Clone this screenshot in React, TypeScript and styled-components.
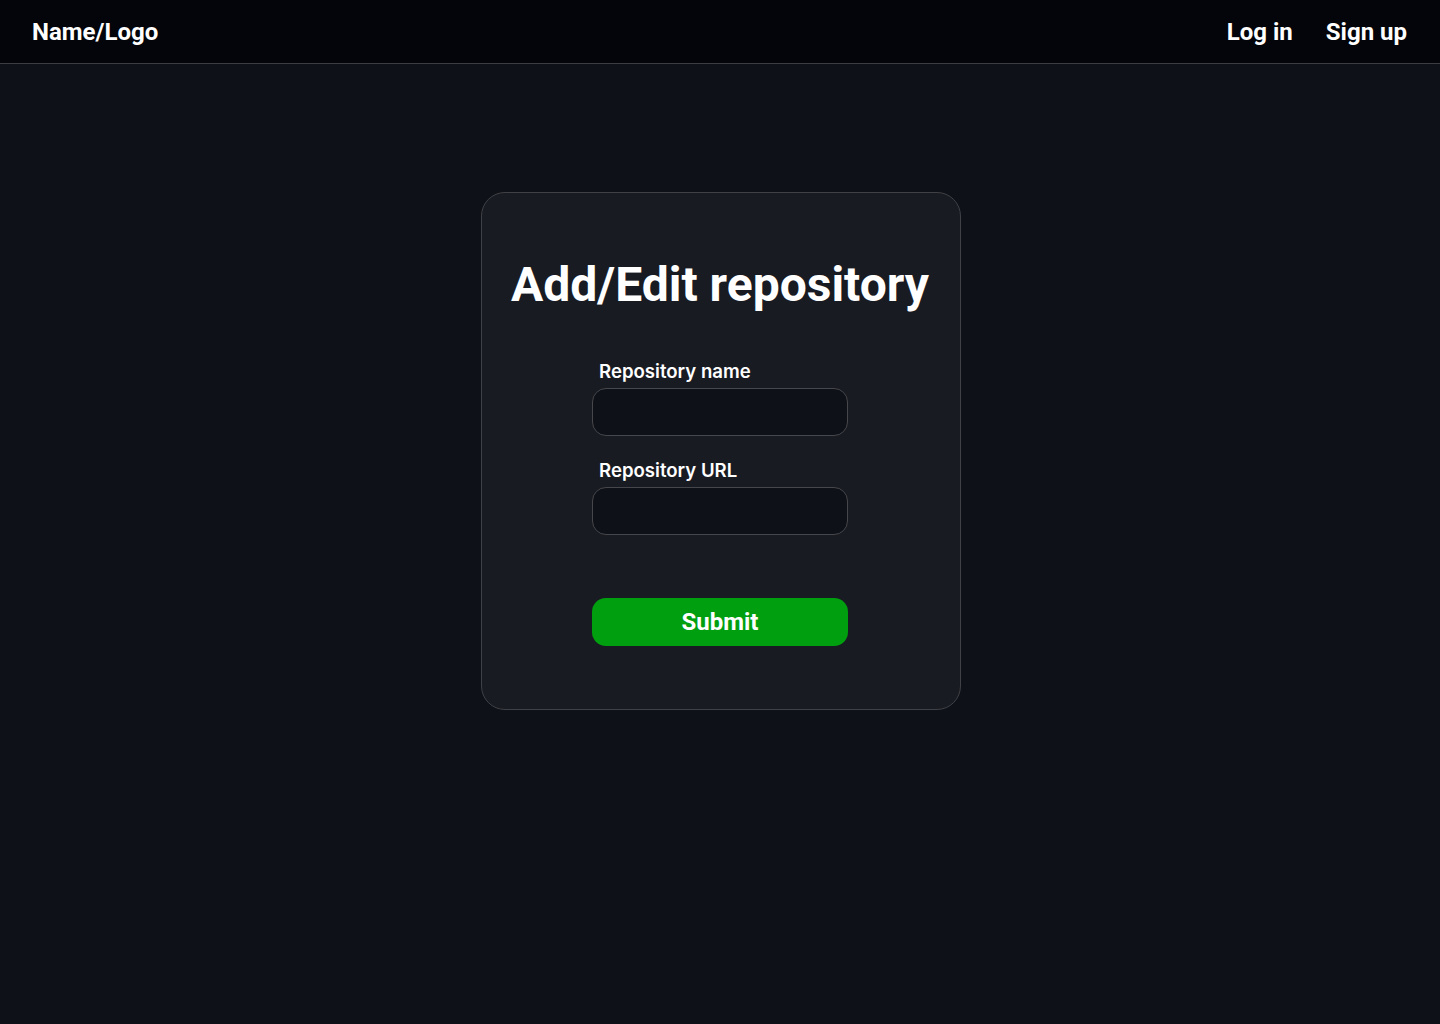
import React from "react";
import styled, { createGlobalStyle } from "styled-components";

const Global = createGlobalStyle`
  html, body { margin: 0; padding: 0; background: #0e1118; }
  body { font-family: Roboto, "Liberation Sans", sans-serif; color: #fff; }
  * { box-sizing: border-box; }
`;

const Page = styled.div`
  min-height: 1024px;
  background: #0e1118;
  display: flex;
  flex-direction: column;
`;

const Header = styled.header`
  height: 64px;
  background: #03050a;
  border-bottom: 1px solid #3b3d42;
  display: flex;
  align-items: center;
  justify-content: space-between;
  padding: 0 33px 0 32px;
`;

const Brand = styled.div`
  font-family: Roboto, sans-serif;
  font-weight: 700;
  font-size: 24px;
  color: #fff;
`;

const Nav = styled.nav`
  display: flex;
  gap: 33px;
`;

const NavLink = styled.a`
  font-family: Roboto, sans-serif;
  font-weight: 700;
  font-size: 24px;
  color: #fff;
  text-decoration: none;
`;

const Main = styled.main`
  display: flex;
  justify-content: center;
  padding: 128px 0 0 2px;
`;

const Card = styled.section`
  width: 480px;
  height: 518px;
  background: #191b22;
  border: 1px solid #3f4146;
  border-radius: 24px;
  display: flex;
  flex-direction: column;
  align-items: center;
  padding: 56px 2px 0 0;
`;

const Title = styled.h1`
  margin: 0;
  font-family: Roboto, sans-serif;
  font-weight: 700;
  font-size: 48px;
  line-height: 72px;
  color: #fff;
`;

const Form = styled.form`
  width: 256px;
  display: flex;
  flex-direction: column;
  margin-top: 39px;
`;

const Field = styled.div<{ $mb: number }>`
  display: flex;
  flex-direction: column;
  gap: 6px;
  margin-bottom: ${(p) => p.$mb}px;
`;

const Label = styled.label`
  font-family: Inter, sans-serif;
  font-weight: 600;
  font-size: 18.6px;
  line-height: 22px;
  padding-left: 7px;
  color: #fff;
`;

const Input = styled.input`
  width: 256px;
  height: 48px;
  background: #0f1118;
  border: 1px solid #45474c;
  border-radius: 14px;
  outline: none;
  color: #fff;
  padding: 0 14px;
  font-size: 16px;
`;

const Submit = styled.button`
  width: 256px;
  height: 48px;
  background: #009f10;
  border: none;
  border-radius: 14px;
  color: #fff;
  font-family: Roboto, sans-serif;
  font-weight: 700;
  font-size: 24px;
  cursor: pointer;
`;

export default function App() {
  return (
    <Page>
      <Global />
      <Header>
        <Brand>Name/Logo</Brand>
        <Nav>
          <NavLink href="#">Log in</NavLink>
          <NavLink href="#">Sign up</NavLink>
        </Nav>
      </Header>
      <Main>
        <Card>
          <Title>Add/Edit repository</Title>
          <Form onSubmit={(e) => e.preventDefault()}>
            <Field $mb={23}>
              <Label>Repository name</Label>
              <Input type="text" />
            </Field>
            <Field $mb={63}>
              <Label>Repository URL</Label>
              <Input type="text" />
            </Field>
            <Submit type="submit">Submit</Submit>
          </Form>
        </Card>
      </Main>
    </Page>
  );
}
